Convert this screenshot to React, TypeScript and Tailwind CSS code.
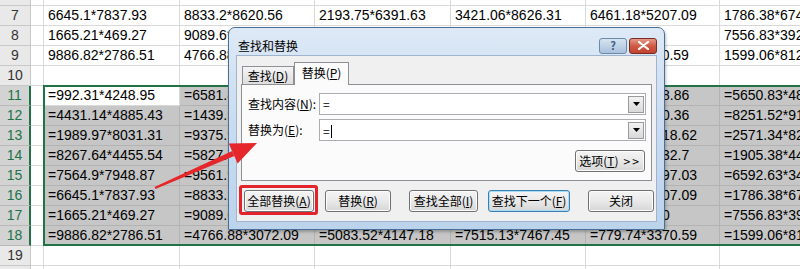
import type { ReactNode } from "react";

const COLS = [13, 136, 135, 136, 135, 134, 135];

type Row = { n: number; cells: string[] };

const rows: Row[] = [
  { n: 6, cells: ["", "7564.9*7948.87", "9561.91*2035.6", "4218.37*961.02", "5903.4*3318.79", "8724.1*5297.03", "6592.63*3417.5"] },
  { n: 7, cells: ["", "6645.1*7837.93", "8833.2*8620.56", "2193.75*6391.63", "3421.06*8626.31", "6461.18*5207.09", "1786.38*674.52"] },
  { n: 8, cells: ["", "1665.21*469.27", "9089.6*4418.7", "5130.88*2674.1", "3328.45*9108.3", "4482.6*720", "7556.83*3924.6"] },
  { n: 9, cells: ["", "9886.82*2786.51", "4766.88*3072.09", "5083.52*4147.18", "7515.13*7467.45", "779.74*3370.59", "1599.06*8120.4"] },
  { n: 10, cells: ["", "", "", "", "", "", ""] },
  { n: 11, cells: ["", "=992.31*4248.95", "=6581.82*1263.4", "=3702.5*1184.6", "=2210.47*5532.1", "=3287.4*528.86", "=5650.83*4805.2"] },
  { n: 12, cells: ["", "=4431.14*4885.43", "=1439.57*620.8", "=6215.3*4470.92", "=1893.26*7702.4", "=8716.2*940.36", "=8251.52*9142.7"] },
  { n: 13, cells: ["", "=1989.97*8031.31", "=9375.96*258.4", "=7048.11*3326.5", "=5581.72*906.38", "=2604.13*718.62", "=2571.34*8265.1"] },
  { n: 14, cells: ["", "=8267.64*4455.54", "=5827.71*3349.5", "=3390.8*6614.27", "=9124.05*2287.6", "=614.58*3932.7", "=1905.38*4451.9"] },
  { n: 15, cells: ["", "=7564.9*7948.87", "=9561.91*2035.6", "=4218.37*961.02", "=5903.4*3318.79", "=8724.1*5297.03", "=6592.63*3417.5"] },
  { n: 16, cells: ["", "=6645.1*7837.93", "=8833.2*8620.56", "=2193.75*6391.63", "=3421.06*8626.31", "=6461.1*5207.09", "=1786.38*674.52"] },
  { n: 17, cells: ["", "=1665.21*469.27", "=9089.6*4418.7", "=5130.88*2674.1", "=3328.45*9108.3", "=4482.6*720", "=7556.83*3924.6"] },
  { n: 18, cells: ["", "=9886.82*2786.51", "=4766.88*3072.09", "=5083.52*4147.18", "=7515.13*7467.45", "=779.74*3370.59", "=1599.06*8120.4"] },
  { n: 19, cells: ["", "", "", "", "", "", ""] },
  { n: 20, cells: ["", "", "", "", "", "", ""] },
];

function SheetRow({ row }: { row: Row }) {
  const sel = row.n >= 11 && row.n <= 18;
  return (
    <div className="flex h-[20px]">
      <div
        className={
          sel
            ? "flex w-[31px] shrink-0 items-center justify-center border-b border-r-2 border-b-[#b9b9b9] border-r-[#217346] bg-[#d3d3d3] text-[#217346]"
            : "flex w-[31px] shrink-0 items-center justify-center border-b border-r border-[#c8c8c8] bg-[#e9e9e9] text-[#333]"
        }
      >
        {row.n}
      </div>
      {row.cells.map((c, i) => {
        const shaded = sel && i > 0 && !(row.n === 11 && i === 1);
        return (
          <div
            key={i}
            style={{ width: COLS[i] }}
            className={
              shaded
                ? "flex shrink-0 items-center overflow-hidden whitespace-nowrap border-b border-r border-[#b3b3b3] bg-[#c6c6c6] pl-[4px] text-black"
                : "flex shrink-0 items-center overflow-hidden whitespace-nowrap border-b border-r border-[#d9d9d9] bg-white pl-[4px] text-black"
            }
          >
            {c}
          </div>
        );
      })}
    </div>
  );
}

function Btn({ children, className = "", focus = false }: { children: ReactNode; className?: string; focus?: boolean }) {
  return (
    <div
      className={
        (focus
          ? "border-[#3c7fb1] shadow-[inset_0_0_0_1px_#a6dcf5] "
          : "border-[#707070] shadow-[inset_0_0_0_1px_#fcfcfc] ") +
        "flex h-[22px] items-center justify-center rounded-[3px] border bg-gradient-to-b from-[#f4f4f4] via-[#e9e9e9] to-[#d6d6d6] text-[12px] leading-none text-black " +
        className
      }
    >
      {children}
    </div>
  );
}

function Combo({ value, caret = false }: { value: string; caret?: boolean }) {
  return (
    <div className="flex h-[22px] w-[327px] items-center border border-[#abadb3] bg-white pl-[3px] pr-[1px]">
      <span className="flex-1 text-[12px] leading-none">
        {value}
        {caret && <span className="ml-[1px] inline-block h-[13px] w-px translate-y-[2px] bg-black" />}
      </span>
      <div className="flex h-[17px] w-[16px] items-center justify-center border border-[#9a9a9a] bg-gradient-to-b from-[#f3f3f3] to-[#d9d9d9]">
        <svg width="7" height="4" viewBox="0 0 7 4">
          <path d="M0 0h7L3.5 4z" fill="#000" />
        </svg>
      </div>
    </div>
  );
}

function Dialog() {
  return (
    <div className="absolute left-[228px] top-[27px] flex h-[203px] w-[437px] flex-col rounded-t-[7px] border border-[#4a6f97] bg-gradient-to-b from-[#dde9f6] via-[#c9dbf0] to-[#bcd3ec] shadow-[1px_2px_3px_rgba(0,0,0,0.25)] font-['Noto_Sans_CJK_SC',sans-serif]">
      {/* title bar */}
      <div className="flex h-[27px] items-center pl-[9px] pr-[7px] pt-[8px]">
        <span className="text-[12px] leading-none text-black">查找和替换</span>
        <div className="ml-auto flex gap-[2px]">
          <div className="flex h-[16px] w-[28px] items-center justify-center rounded-[3px] border border-[#6d8aa9] bg-gradient-to-b from-[#d6e3f1] to-[#a9c1dc] text-[11px] font-bold leading-none text-[#3b5f86]">
            ?
          </div>
          <div className="flex h-[16px] w-[28px] items-center justify-center rounded-[3px] border border-[#7a2c22] bg-gradient-to-b from-[#e49a8a] via-[#cf5a44] to-[#c2432f]">
            <svg width="11" height="9" viewBox="0 0 11 9">
              <path d="M1 1l9 7M10 1L1 8" stroke="#fff" strokeWidth="2.2" strokeLinecap="round" />
            </svg>
          </div>
        </div>
      </div>

      {/* body */}
      <div className="mx-[7px] mb-[7px] flex flex-1 flex-col border border-[#9fb5cf] bg-[#f0f0f0]">
        {/* tabs */}
        <div className="ml-[5px] mt-[6px] flex items-end">
          <div className="flex h-[18px] w-[52px] items-center justify-center border border-b-0 border-[#8e9096] bg-gradient-to-b from-[#f5f5f5] to-[#dedede] text-[12px] leading-none">
            查找(<span className="underline">D</span>)
          </div>
          <div className="relative z-10 -mb-px flex h-[23px] w-[55px] items-center justify-center border border-b-0 border-[#8e9096] bg-[#fbfbfb] pb-[2px] text-[12px] leading-none">
            替换(<span className="underline">P</span>)
          </div>
        </div>
        <div className="ml-[4px] mr-[4px] flex h-[97px] flex-col border border-[#8e9096] bg-[#fbfbfb] pl-[6px] pr-[4px] pt-[8px]">
          <div className="flex items-center">
            <span className="w-[71px] text-[12px] leading-none">
              查找内容(<span className="underline">N</span>):
            </span>
            <Combo value="=" />
          </div>
          <div className="mt-[4px] flex items-center">
            <span className="w-[71px] text-[12px] leading-none">
              替换为(<span className="underline">E</span>):
            </span>
            <Combo value="=" caret />
          </div>
          <div className="mt-[9px] flex justify-end pr-[2px]">
            <Btn className="w-[70px]">
              选项(<span className="underline">T</span>)<span className="ml-[5px] tracking-[2px]">&gt;&gt;</span>
            </Btn>
          </div>
        </div>

        {/* buttons */}
        <div className="mt-[9px] flex">
          <div className="relative ml-[7px]">
            <Btn className="w-[70px]">
              全部替换(<span className="underline">A</span>)
            </Btn>
            <div className="absolute -bottom-[3px] -left-[5px] -right-[4px] -top-[5px] rounded-[3px] border-[3px] border-[#e3232b]" />
          </div>
          <Btn className="ml-[11px] w-[66px]">
            替换(<span className="underline">R</span>)
          </Btn>
          <Btn className="ml-[18px] w-[69px]">
            查找全部(<span className="underline">I</span>)
          </Btn>
          <Btn className="ml-[10px] w-[82px]" focus>
            查找下一个(<span className="underline">F</span>)
          </Btn>
          <Btn className="ml-[18px] w-[66px]">关闭</Btn>
        </div>
      </div>
    </div>
  );
}

export default function App() {
  return (
    <div className="relative h-[269px] w-[800px] overflow-hidden bg-white font-['Liberation_Sans',sans-serif] text-[14px]">
      <div className="-mt-[14px] flex flex-col">
        {rows.map((r) => (
          <SheetRow key={r.n} row={r} />
        ))}
      </div>

      {/* selection outline */}
      <div className="pointer-events-none absolute left-[43px] top-[85px] h-[161px] w-[800px] border-2 border-[#217346]" />

      <Dialog />

      {/* red arrow */}
      <svg className="pointer-events-none absolute inset-0" width="800" height="269" viewBox="0 0 800 269">
        <polygon points="155.5,189.1 154.5,186.9 232.1,151 234.3,156.1" fill="#e5262b" />
        <polygon points="257,143 228.8,143.4 237.6,163.6" fill="#e5262b" />
      </svg>
    </div>
  );
}
